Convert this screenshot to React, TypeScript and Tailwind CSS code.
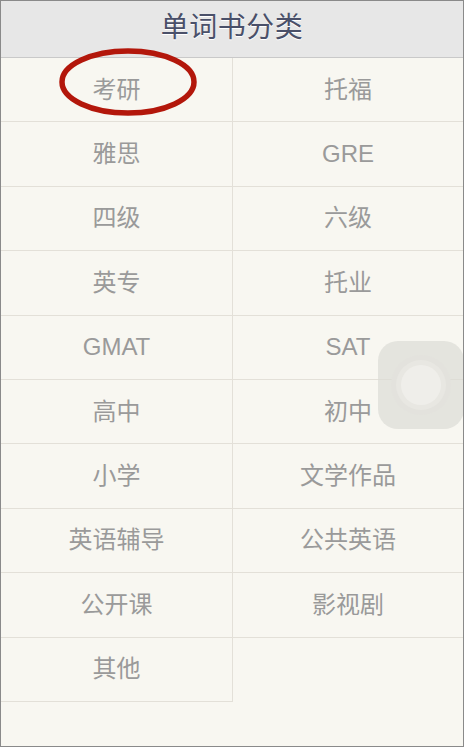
import React from "react";

const items = [
  "考研", "托福", "雅思", "GRE", "四级", "六级", "英专", "托业", "GMAT", "SAT",
  "高中", "初中", "小学", "文学作品", "英语辅导", "公共英语", "公开课", "影视剧", "其他",
];

export default function App() {
  return (
    <div
      className="relative w-[464px] h-[747px] overflow-hidden border border-[#8a8a8a] bg-[#f8f7f1]"
      style={{ fontFamily: '"Liberation Sans", "Noto Sans CJK SC", sans-serif' }}
    >
      <div className="h-[57px] bg-[#e7e7e7] border-b border-[#c9c9c9] flex items-center justify-center pb-[2px]">
        <span className="text-[28px] text-[#4a5069] tracking-[0.5px] [text-shadow:0_1px_0_#ffffff]">单词书分类</span>
      </div>
      <div className="grid grid-cols-[232px_1fr]">
        {items.map((t, i) => (
          <div
            key={t}
            className={
              "h-[64.4px] flex items-center justify-center border-b border-[#e3e0d8] text-[24px] text-[#9a9a9a] " +
              (i % 2 === 0 ? "border-r" : "")
            }
          >
            {t}
          </div>
        ))}
      </div>
      <svg className="absolute left-[56px] top-[45px]" width="142" height="72" viewBox="0 0 142 72">
        <ellipse cx="71" cy="36" rx="66" ry="31" fill="none" stroke="#b3170b" strokeWidth="5.5" />
      </svg>
      <div className="absolute left-[377px] top-[340px] w-[86px] h-[88px] rounded-[20px] bg-[#dcdbd5]/70 flex items-center justify-center">
        <div className="w-[60px] h-[60px] rounded-full bg-[#e3e2dd] flex items-center justify-center">
          <div className="w-[50px] h-[50px] rounded-full bg-[#e8e7e2] flex items-center justify-center">
            <div className="w-[40px] h-[40px] rounded-full bg-[#efeeea]" />
          </div>
        </div>
      </div>
    </div>
  );
}
